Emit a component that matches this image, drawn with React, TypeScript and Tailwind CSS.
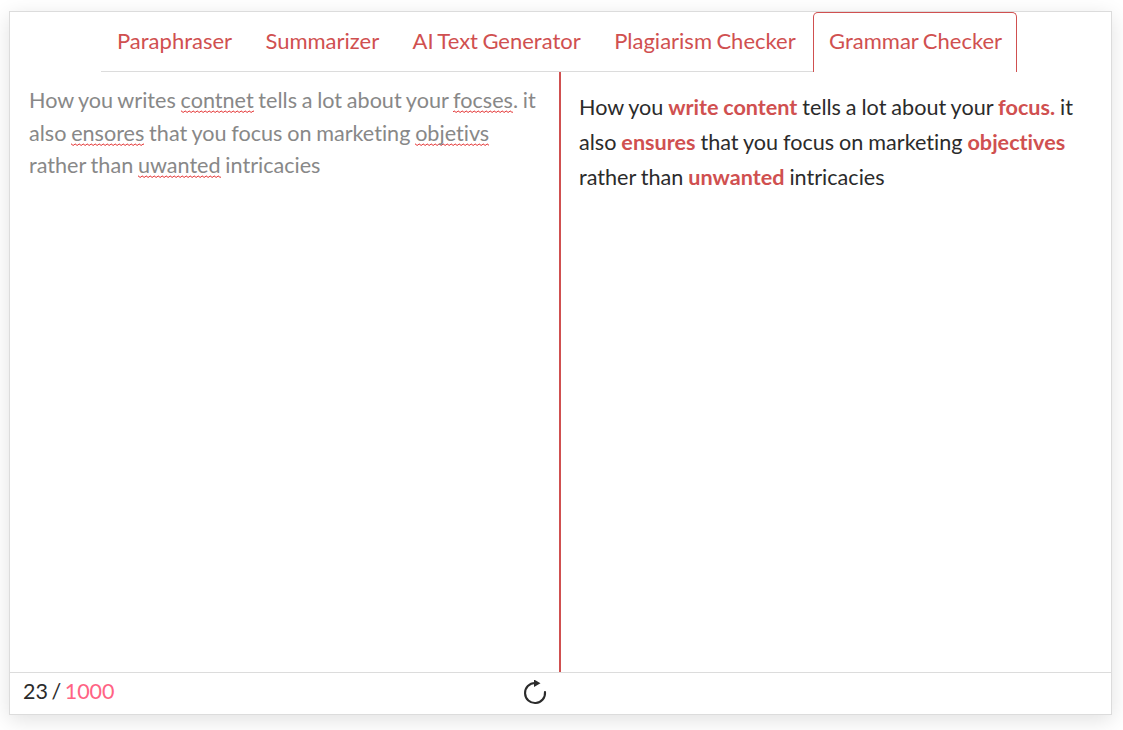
const tabs = ["Paraphraser", "Summarizer", "AI Text Generator", "Plagiarism Checker"];

function Typo({ children }: { children: string }) {
  return (
    <span className={`bg-[url("data:image/svg+xml,%3Csvg%20xmlns='http://www.w3.org/2000/svg'%20width='4'%20height='3'%3E%3Cpath%20d='M0%202Q1%200%202%201.5T4%202'%20fill='none'%20stroke='%23e02020'%20stroke-width='.9'/%3E%3C/svg%3E")] bg-bottom bg-repeat-x`}>
      {children}
    </span>
  );
}

function Fix({ children }: { children: string }) {
  return <span className="font-bold text-[#d05050]">{children}</span>;
}

export default function App() {
  return (
    <div className="h-[730px] w-[1123px] overflow-hidden bg-white pl-[9px] pt-[11px] font-['Lato',sans-serif] [font-variant-ligatures:none]">
      <div className="flex h-[704px] w-[1103px] flex-col border border-[#dcdcdc] bg-white shadow-[0_5px_20px_rgba(0,0,0,0.12)]">
        {/* Tabs */}
        <div className="flex h-[60px] shrink-0 justify-start pl-[91px]">
          <div className="flex w-[916px] border-b border-[#dcdcdc]">
            {tabs.map((tab) => (
              <div key={tab} className="mr-[1.35px] flex items-center whitespace-nowrap px-4 pb-[2px] text-[22px] text-[#d05050] [word-spacing:-1.2px]">
                {tab}
              </div>
            ))}
            <div className="-mb-px flex items-center whitespace-nowrap rounded-t-[5px] border border-b-0 border-[#d05050] bg-white pb-[4px] pl-[15px] pr-[14px] text-[22px] text-[#d05050] [word-spacing:-1.2px]">
              Grammar Checker
            </div>
          </div>
        </div>

        {/* Panels */}
        <div className="flex min-h-0 flex-1">
          <div className="w-[549px] shrink-0 pl-[19px] pr-[12px] pt-[12px] text-[21.6px] leading-[32.5px] text-[#888888] [word-spacing:-0.8px]">
            How you writes <Typo>contnet</Typo> tells a lot about your <Typo>focses</Typo>. it also <Typo>ensores</Typo> that
            you focus on marketing <Typo>objetivs</Typo> rather than <Typo>uwanted</Typo> intricacies
          </div>
          <div className="flex-1 border-l-2 border-[#d05050] pl-[18px] pr-[30px] pt-[18px] text-[21.6px] leading-[35px] text-[#2b2b2b] [word-spacing:-0.6px]">
            How you <Fix>write content</Fix> tells a lot about your <Fix>focus.</Fix> it also <Fix>ensures</Fix> that you focus
            on marketing <Fix>objectives</Fix> rather than <Fix>unwanted</Fix> intricacies
          </div>
        </div>

        {/* Footer */}
        <div className="flex h-[42px] shrink-0 items-center border-t border-[#dcdcdc] pb-[4px] pl-[13px]">
          <div className="w-[500px] text-[21.5px] text-[#2b2b2b] [word-spacing:-2px]">
            23 / <span className="text-[#ff6384]">1000</span>
          </div>
          <svg width="24" height="26" viewBox="0 0 24 26" fill="none" className="mt-[3px]">
            <path d="M12 3 A10 10 0 1 0 22 12" stroke="#2b2b2b" strokeWidth="2.1" strokeLinecap="round" />
            <path d="M11 -0.5 L17.5 3.2 L11 7 Z" fill="#2b2b2b" />
          </svg>
        </div>
      </div>
    </div>
  );
}
